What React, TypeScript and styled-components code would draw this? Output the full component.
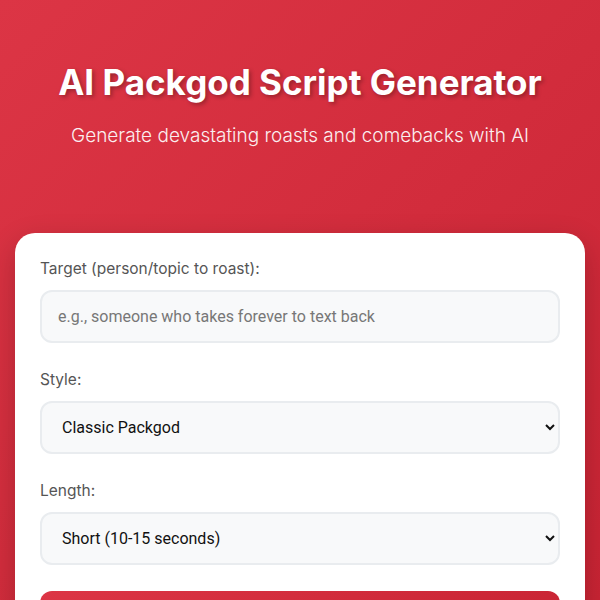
import React, { useState } from 'react';
import styled, { createGlobalStyle } from 'styled-components';

const GlobalStyle = createGlobalStyle`
    * { box-sizing: border-box; }
    body {
        margin: 0;
        font-family: Inter, "Liberation Sans", sans-serif;
        background: linear-gradient(135deg, #dc3545 0%, #c82333 100%);
        min-height: 100vh;
    }
`;

const Page = styled.div`
    max-width: 600px;
    margin: 0 auto;
    padding: 0 15px;
`;

const Header = styled.header`
    text-align: center;
    color: white;
    padding: 60px 0 84px;
`;

const Title = styled.h1`
    margin: 0 0 18px;
    font-size: 35px;
    font-weight: 700;
    line-height: 1.3;
    text-shadow: 2px 2px 4px rgba(0, 0, 0, 0.3);
`;

const Subtitle = styled.p`
    margin: 0 0 2px;
    font-size: 19px;
    font-weight: 300;
    opacity: 0.92;
`;

const Card = styled.div`
    background: white;
    border-radius: 20px;
    padding: 25px;
    box-shadow: 0 10px 30px rgba(0, 0, 0, 0.2);
`;

const Group = styled.div`
    margin-bottom: 26px;
`;

const Label = styled.label`
    display: block;
    margin-bottom: 10px;
    font-size: 15.5px;
    line-height: 22px;
    font-weight: 400;
    color: #555;
`;

const fieldStyles = `
    width: 100%;
    height: 53px;
    padding: 0 16px;
    font-family: Roboto, "Liberation Sans", sans-serif;
    font-size: 16px;
    color: #111;
    background: #f8f9fa;
    border: 2px solid #e9ecef;
    border-radius: 12px;
    outline: none;
`;

const Input = styled.input`
    ${fieldStyles}
    &::placeholder { color: #777; }
`;

const Select = styled.select`
    ${fieldStyles}
`;

const Button = styled.button`
    width: 100%;
    padding: 18px;
    border: none;
    border-radius: 12px;
    background: linear-gradient(135deg, #dc3545 0%, #c82333 100%);
    color: white;
    font-family: Inter, "Liberation Sans", sans-serif;
    font-size: 18px;
    font-weight: 600;
`;

export default function App() {
    const [target, setTarget] = useState('');
    return (
        <Page>
            <GlobalStyle />
            <Header>
                <Title>AI Packgod Script Generator</Title>
                <Subtitle>Generate devastating roasts and comebacks with AI</Subtitle>
            </Header>
            <Card>
                <Group>
                    <Label htmlFor="target">Target (person/topic to roast):</Label>
                    <Input
                        id="target"
                        value={target}
                        onChange={e => setTarget(e.target.value)}
                        placeholder="e.g., someone who takes forever to text back"
                    />
                </Group>
                <Group>
                    <Label htmlFor="style">Style:</Label>
                    <Select id="style" defaultValue="classic">
                        <option value="classic">Classic Packgod</option>
                        <option value="savage">Extra Savage</option>
                        <option value="rhyme">Rhyming</option>
                    </Select>
                </Group>
                <Group>
                    <Label htmlFor="length">Length:</Label>
                    <Select id="length" defaultValue="short">
                        <option value="short">Short (10-15 seconds)</option>
                        <option value="medium">Medium (30 seconds)</option>
                        <option value="long">Long (1 minute)</option>
                    </Select>
                </Group>
                <Button type="button">Generate Roast</Button>
            </Card>
        </Page>
    );
}
